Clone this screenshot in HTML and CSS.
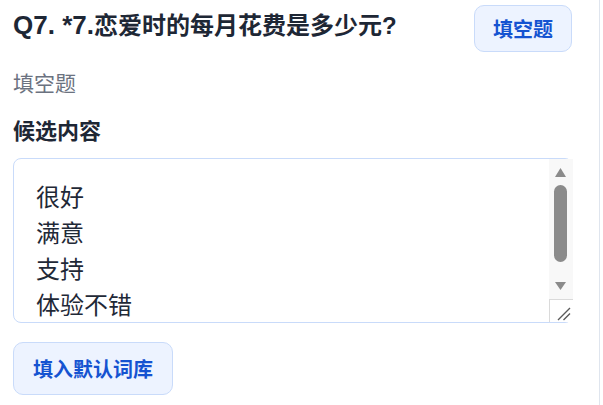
FILE: index.html
```html
<!DOCTYPE html>
<html lang="zh-CN">
<head>
<meta charset="utf-8">
<title>填空题</title>
<link rel="stylesheet" href="styles.css">
</head>
<body>
<main class="panel">
  <div class="head">
    <h2 class="title"><span class="qno">Q7. *7.</span>恋爱时的每月花费是多少元?</h2>
    <button class="tag" type="button">填空题</button>
  </div>
  <div class="type">填空题</div>
  <div class="label">候选内容</div>
  <div class="field">
    <textarea class="words">很好
满意
支持
体验不错</textarea>
    <svg class="sbar" width="24" height="163" viewBox="0 0 24 163" aria-hidden="true">
      <rect x="0" y="0" width="24" height="140" fill="#f8f8f8"/>
      <polygon points="6,18 17,18 11.5,9" fill="#8b8b8b"/>
      <rect x="5" y="26" width="13" height="77" rx="6.5" fill="#8b8b8b"/>
      <polygon points="6,123 17,123 11.5,131" fill="#8b8b8b"/>
      <rect x="0" y="140" width="24" height="23" fill="#ffffff"/>
      <path d="M0.5 140 V163 M0 140.5 H24" stroke="#dadada" stroke-width="1" fill="none"/>
      <path d="M9 161 L21 149 M14.5 161 L21 154.5" stroke="#5a5a5a" stroke-width="1.4" fill="none"/>
    </svg>
  </div>
  <button class="fill" type="button">填入默认词库</button>
</main>
</body>
</html>
```
FILE: styles.css
```css
html, body {
  margin: 0;
  padding: 0;
  background: #ffffff;
}
body {
  font-family: "Liberation Sans", "Noto Sans CJK SC", sans-serif;
  color: #1f2937;
}
.panel {
  box-sizing: border-box;
  width: 600px;
  height: 405px;
  padding: 5px 27px 0 13px;
  border-right: 1px solid #dfe5ee;
  display: flex;
  flex-direction: column;
  align-items: flex-start;
}
.head {
  width: 100%;
  display: flex;
  justify-content: space-between;
  align-items: flex-start;
}
.title {
  margin: 6px 0 0 0;
  font-size: 24px;
  line-height: 28px;
  font-weight: 700;
  color: #1e2735;
}
.qno {
  font-size: 26px;
}
.tag {
  box-sizing: border-box;
  height: 47px;
  padding: 0 18px;
  border: 1px solid #c9dbfa;
  border-radius: 10px;
  background: #edf3ff;
  color: #1553d1;
  font-family: "Liberation Sans", "Noto Sans CJK SC", sans-serif;
  font-size: 20px;
  font-weight: 700;
}
.type {
  margin-top: 18px;
  font-size: 21px;
  line-height: 28px;
  color: #6b7280;
}
.label {
  margin-top: 20px;
  font-size: 22px;
  line-height: 28px;
  font-weight: 700;
  color: #1e2735;
}
.field {
  position: relative;
  margin-top: 12px;
  width: 560px;
  height: 165px;
}
.words {
  display: block;
  box-sizing: border-box;
  width: 100%;
  height: 100%;
  margin: 0;
  padding: 21px 30px 29px 22px;
  border: 1px solid #c9dbfa;
  border-radius: 8px;
  font-family: "Liberation Sans", "Noto Sans CJK SC", sans-serif;
  font-size: 24px;
  line-height: 36px;
  color: #1f2937;
  background: #ffffff;
  outline: none;
  resize: none;
  overflow: hidden;
}
.sbar {
  position: absolute;
  top: 1px;
  right: 0;
  display: block;
}
.fill {
  box-sizing: border-box;
  margin-top: 19px;
  height: 53px;
  padding: 0 19px;
  border: 1px solid #c9dbfa;
  border-radius: 10px;
  background: #edf3ff;
  color: #1553d1;
  font-family: "Liberation Sans", "Noto Sans CJK SC", sans-serif;
  font-size: 20px;
  font-weight: 700;
}
```
